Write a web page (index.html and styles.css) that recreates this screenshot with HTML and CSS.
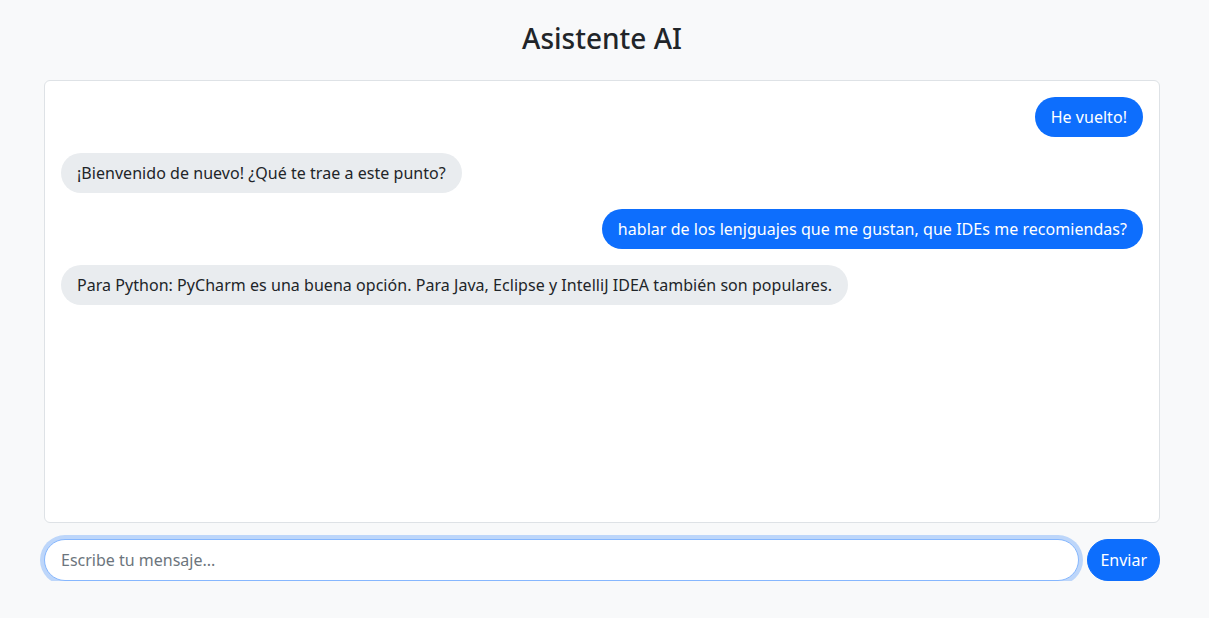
FILE: index.html
```html
<!DOCTYPE html>
<html lang="es">
<head>
<meta charset="utf-8">
<title>Asistente AI</title>
<link rel="stylesheet" href="styles.css">
</head>
<body>
<div class="app">
  <h2 class="title">Asistente AI</h2>
  <div class="chat">
    <div class="msg user">He vuelto!</div>
    <div class="msg bot">¡Bienvenido de nuevo! ¿Qué te trae a este punto?</div>
    <div class="msg user">hablar de los lenjguajes que me gustan, que IDEs me recomiendas?</div>
    <div class="msg bot">Para Python: PyCharm es una buena opción. Para Java, Eclipse y IntelliJ IDEA también son populares.</div>
  </div>
  <form class="composer">
    <input class="input" type="text" placeholder="Escribe tu mensaje..." autofocus>
    <button class="send" type="button">Enviar</button>
  </form>
</div>
</body>
</html>
```
FILE: styles.css
```css
* { box-sizing: border-box; }
html, body { margin: 0; padding: 0; }
body {
  background: #f8f9fa;
  font-family: "Noto Sans", "Open Sans", sans-serif;
  color: #212529;
  font-size: 16px;
  line-height: 1.5;
}
.app {
  padding: 21px 49px 0 44px;
}
.title {
  margin: 0 0 25px 0;
  text-align: center;
  font-size: 28px;
  font-weight: 500;
  line-height: 34px;
  color: #212529;
}
.chat {
  height: 443px;
  background: #fff;
  border: 1px solid #dee2e6;
  border-radius: 6px;
  padding: 16px;
  display: flex;
  flex-direction: column;
  gap: 16px;
  overflow-y: auto;
}
.msg {
  max-width: 80%;
  padding: 8px 16px;
  border-radius: 20px;
  line-height: 24px;
  letter-spacing: 0.04px;
}
.user {
  align-self: flex-end;
  background: #0d6efd;
  color: #fff;
}
.bot {
  align-self: flex-start;
  background: #e9ecef;
  color: #212529;
}
.composer {
  margin-top: 16px;
  display: flex;
  gap: 8px;
}
.input {
  flex: 1;
  height: 42px;
  padding: 8px 16px;
  border: 1px solid #86b7fe;
  border-radius: 21px;
  font-family: inherit;
  font-size: 16px;
  color: #212529;
  background: #fff;
  outline: none;
  box-shadow: 0 0 0 4px rgba(13,110,253,.25);
}
.input::placeholder { color: #6c757d; }
.send {
  height: 42px;
  padding: 8px 12px;
  border: 1px solid #0d6efd;
  background: #0d6efd;
  color: #fff;
  border-radius: 21px;
  font-family: inherit;
  font-size: 16px;
  line-height: 24px;
}
```
